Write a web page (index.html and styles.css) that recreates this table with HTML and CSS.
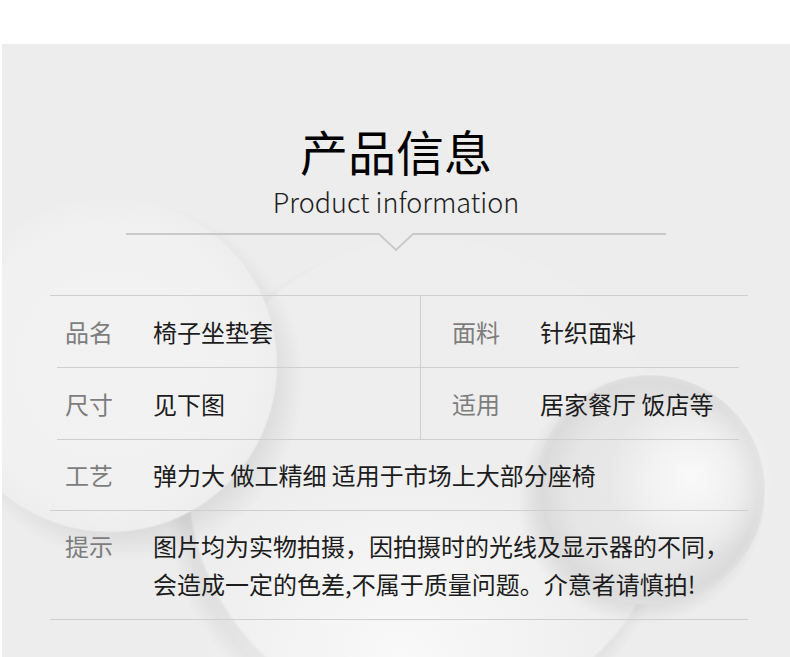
FILE: index.html
```html
<!DOCTYPE html>
<html>
<head>
  <meta charset="utf-8">
  <link rel="stylesheet" href="styles.css">
</head>
<body>
  <section class="info">
    <header class="info-head">
      <h1 class="info-title">产品信息</h1>
      <p class="info-sub">Product information</p>
      <svg class="info-divider" width="540" height="20" viewBox="0 0 540 20">
        <path d="M0 2H253L270 18L287 2H540" fill="none" stroke="#c9c9c9" stroke-width="2"/>
      </svg>
    </header>

    <div class="spec">
      <div class="spec-pair">
        <div class="spec-cell">
          <span class="spec-label">品名</span>
          <span class="spec-value">椅子坐垫套</span>
        </div>
        <div class="spec-cell">
          <span class="spec-label">面料</span>
          <span class="spec-value">针织面料</span>
        </div>
      </div>
      <div class="spec-pair">
        <div class="spec-cell">
          <span class="spec-label">尺寸</span>
          <span class="spec-value">见下图</span>
        </div>
        <div class="spec-cell">
          <span class="spec-label">适用</span>
          <span class="spec-value">居家餐厅 饭店等</span>
        </div>
      </div>
      <div class="spec-row">
        <span class="spec-label">工艺</span>
        <span class="spec-value">弹力大 做工精细 适用于市场上大部分座椅</span>
      </div>
      <div class="spec-row spec-row-tall">
        <span class="spec-label">提示</span>
        <span class="spec-value">图片均为实物拍摄，因拍摄时的光线及显示器的不同，<br>会造成一定的色差,不属于质量问题。介意者请慎拍!</span>
      </div>
    </div>
  </section>
</body>
</html>
```

FILE: styles.css
```css
* {
  box-sizing: border-box;
}

body {
  margin: 0;
  background: #fff;
  font-family: "Noto Sans CJK SC", "Noto Sans", sans-serif;
}

/* grey panel with the soft spheres painted in the background */
.info {
  margin: 44px 0 0 2px;
  height: 613px;
  overflow: hidden;
  background:
    radial-gradient(circle 82px at 690px 434px, rgba(250, 250, 250, 0.95) 0, rgba(248, 248, 248, 0.55) 55%, rgba(248, 248, 248, 0) 100%),
    radial-gradient(circle 115px at 648px 446px, #eaeaea 0, #e6e6e6 80px, #dbdbdb 108px, #dfdfdf 114px, rgba(236, 236, 236, 0) 115.5px),
    radial-gradient(circle 120px at 640px 456px, rgba(0, 0, 0, 0.07) 0, rgba(0, 0, 0, 0.07) 104px, rgba(0, 0, 0, 0) 124px),
    radial-gradient(circle 168px at 108px 321px, #f2f2f2 0, #f1f1f1 140px, #eeeeee 166px, rgba(239, 239, 239, 0) 168px),
    radial-gradient(circle 180px at 122px 337px, rgba(0, 0, 0, 0.07) 0, rgba(0, 0, 0, 0.07) 150px, rgba(0, 0, 0, 0) 180px),
    radial-gradient(circle 210px at 400px 613px, rgba(250, 250, 250, 0.9) 0, rgba(248, 248, 248, 0) 100%),
    radial-gradient(circle 243px at 428px 436px, #eeeeee 0, #eeeeee 240px, rgba(238, 238, 238, 0) 243px),
    radial-gradient(circle 255px at 418px 452px, rgba(0, 0, 0, 0.06) 0, rgba(0, 0, 0, 0.06) 236px, rgba(0, 0, 0, 0) 255px),
    #ededed;
}

.info-head {
  padding-top: 82px;
  text-align: center;
}

.info-title {
  margin: 0;
  font-size: 48px;
  line-height: 48px;
  font-weight: 400;
  color: #000;
}

.info-sub {
  margin: 10px 0 0;
  font-size: 27px;
  line-height: 36px;
  font-weight: 300;
  color: #1e1e1e;
}

.info-divider {
  display: block;
  margin: 12px auto 0;
}

.spec {
  width: 698px;
  margin: 43px 0 0 48px;
  border-top: 1px solid #cfcfcf;
  font-size: 24px;
  line-height: 38px;
}

.spec-pair {
  display: grid;
  grid-template-columns: 364px 1fr;
  margin: 0 9px 0 7px;
  border-bottom: 1px solid #cfcfcf;
}

.spec-cell {
  display: flex;
  align-items: center;
  height: 71px;
  padding-left: 31px;
}

.spec-cell:first-child {
  padding-left: 8px;
  border-right: 1px solid #cfcfcf;
}

.spec-row {
  display: flex;
  align-items: center;
  min-height: 71px;
  padding-left: 15px;
  border-bottom: 1px solid #cfcfcf;
}

.spec-row-tall {
  align-items: flex-start;
  padding-top: 16px;
  padding-bottom: 16px;
}

.spec-label {
  flex-shrink: 0;
  width: 88px;
  color: #7d7d7d;
}

.spec-value {
  color: #1c1c1c;
}
```
